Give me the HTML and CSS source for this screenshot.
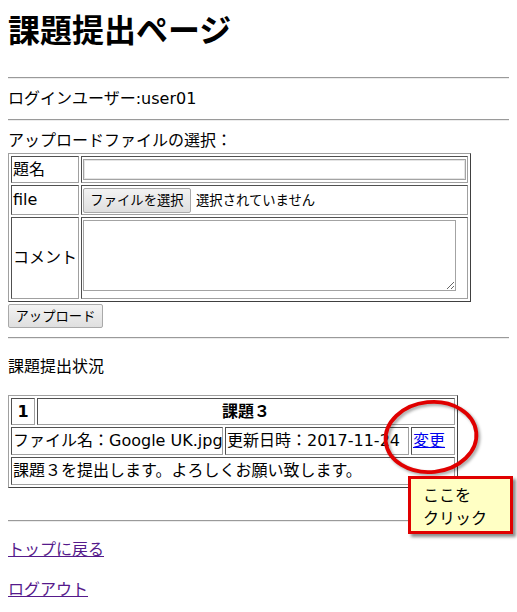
FILE: index.html
```html
<!DOCTYPE html>
<html lang="ja">
<head>
<meta charset="utf-8">
<title>課題提出ページ</title>
<link rel="stylesheet" href="styles.css">
</head>
<body>
<h1 class="title">課題提出ページ</h1>
<hr class="rule">
<div class="line">ログインユーザー:user01</div>
<hr class="rule">
<form class="upload">
  <div class="line">アップロードファイルの選択：</div>
  <div class="form-grid">
    <div class="cell label">題名</div>
    <div class="cell"><input class="text-in" type="text"></div>
    <div class="cell label">file</div>
    <div class="cell"><button type="button" class="btn file-btn">ファイルを選択</button><span class="nofile">選択されていません</span></div>
    <div class="cell label">コメント</div>
    <div class="cell top"><textarea class="comment"></textarea></div>
  </div>
  <button type="button" class="btn upload-btn">アップロード</button>
</form>
<hr class="rule rule-after-form">
<p class="para">課題提出状況</p>
<div class="status-grid">
  <div class="cell head">1</div>
  <div class="cell head span-3">課題３</div>
  <div class="cell span-2 nowrap">ファイル名：Google UK.jpg</div>
  <div class="cell nowrap">更新日時：2017-11-24</div>
  <div class="cell"><a class="link" href="#">変更</a></div>
  <div class="cell span-4 nowrap">課題３を提出します。よろしくお願い致します。</div>
</div>
<hr class="rule rule-bottom">
<p class="para"><a class="link visited" href="#">トップに戻る</a></p>
<p class="para"><a class="link visited" href="#">ログアウト</a></p>

<svg class="mark" width="110" height="90" viewBox="0 0 110 90">
  <ellipse cx="51" cy="42" rx="45.5" ry="35" fill="none" stroke="#e00000" stroke-width="3.8" transform="rotate(-6 51 42)"/>
</svg>
<div class="callout"><div class="callout-line">ここを</div><div class="callout-line">クリック</div></div>
</body>
</html>
```
FILE: styles.css
```css
* { box-sizing: border-box; }
html { margin: 0; }
body {
  margin: 0 8px;
  font: 16px/24px "DejaVu Sans", "Noto Sans CJK JP", sans-serif;
  color: #000;
  background: #fff;
}
.title {
  margin: 8px 0 29px;
  font: bold 32px/40px "Noto Sans CJK JP", sans-serif;
}
.rule {
  height: 0;
  margin: 8px -8px 8px 0;
  border: 0;
  border-top: 1px solid #9a9a9a;
  border-bottom: 1px solid #ececec;
}
.rule-after-form { margin-top: 9px; }
.rule-bottom { margin-top: 32px; }
.line { line-height: 24px; }
.upload { margin: 0; }
.form-grid {
  display: grid;
  width: max-content;
  grid-template-columns: 68px 387px;
  grid-template-rows: 27px 30px 82px;
  gap: 2px;
  padding: 2px;
  border: 1px solid;
  border-color: #a0a0a0 #404040 #404040 #a0a0a0;
}
.cell {
  display: flex;
  align-items: center;
  padding: 1px;
  border: 1px solid;
  border-color: #505050 #a0a0a0 #a0a0a0 #505050;
  white-space: nowrap;
}
.cell.top { align-items: flex-start; }
.text-in {
  width: 383px;
  height: 21px;
  margin: 0;
  padding: 1px 2px;
  border: 1px solid #a3a3a3;
  box-shadow: inset 0 0 0 1px #e4e4e4;
  font: 13.33px "Noto Sans CJK JP", sans-serif;
}
.btn {
  margin: 0;
  border: 1px solid #a9a9a9;
  border-radius: 2px;
  background: linear-gradient(#f3f3f3, #dfdfdf);
  color: #000;
  font: 13.33px/20px "Noto Sans CJK JP", sans-serif;
  padding: 0 6px;
}
.file-btn { height: 25px; width: 108px; padding: 0; }
.nofile {
  margin-left: 5px;
  font: 13.33px/20px "Noto Sans CJK JP", sans-serif;
}
.comment {
  display: block;
  width: 373px;
  height: 71px;
  margin: 1px 0 0;
  border: 1px solid #a3a3a3;
  resize: both;
  font: 13.33px "DejaVu Sans Mono", monospace;
}
.upload-btn {
  display: block;
  width: 95px;
  height: 24px;
  margin-top: 2px;
  padding: 0;
}
.para { margin: 16px 0; }
.status-grid {
  display: grid;
  width: max-content;
  grid-template-columns: 24px 186px 184px 44px;
  grid-template-rows: 27px 28px 28px;
  gap: 2px;
  padding: 2px;
  border: 1px solid;
  border-color: #a0a0a0 #404040 #404040 #a0a0a0;
}
.head {
  justify-content: center;
  font-weight: bold;
}
.span-2 { grid-column: span 2; }
.span-3 { grid-column: span 3; }
.span-4 { grid-column: span 4; }
.nowrap { white-space: nowrap; overflow: visible; }
.link { color: #0000ee; text-decoration: underline; }
.link.visited { color: #551a8b; }
.mark {
  position: absolute;
  left: 380px;
  top: 395px;
  overflow: visible;
  filter: drop-shadow(2px 2px 1.5px rgba(0, 0, 0, 0.35));
}
.callout {
  position: absolute;
  left: 408px;
  top: 476px;
  width: 105px;
  height: 58px;
  padding: 4px 0 0 12px;
  border: 3px solid #e00000;
  background: #ffffc4;
  box-shadow: 3px 3px 3px rgba(0, 0, 0, 0.45);
  font: 16px/23px "Noto Sans CJK JP", sans-serif;
  color: #000;
}
.callout-line { height: 23px; }
```
